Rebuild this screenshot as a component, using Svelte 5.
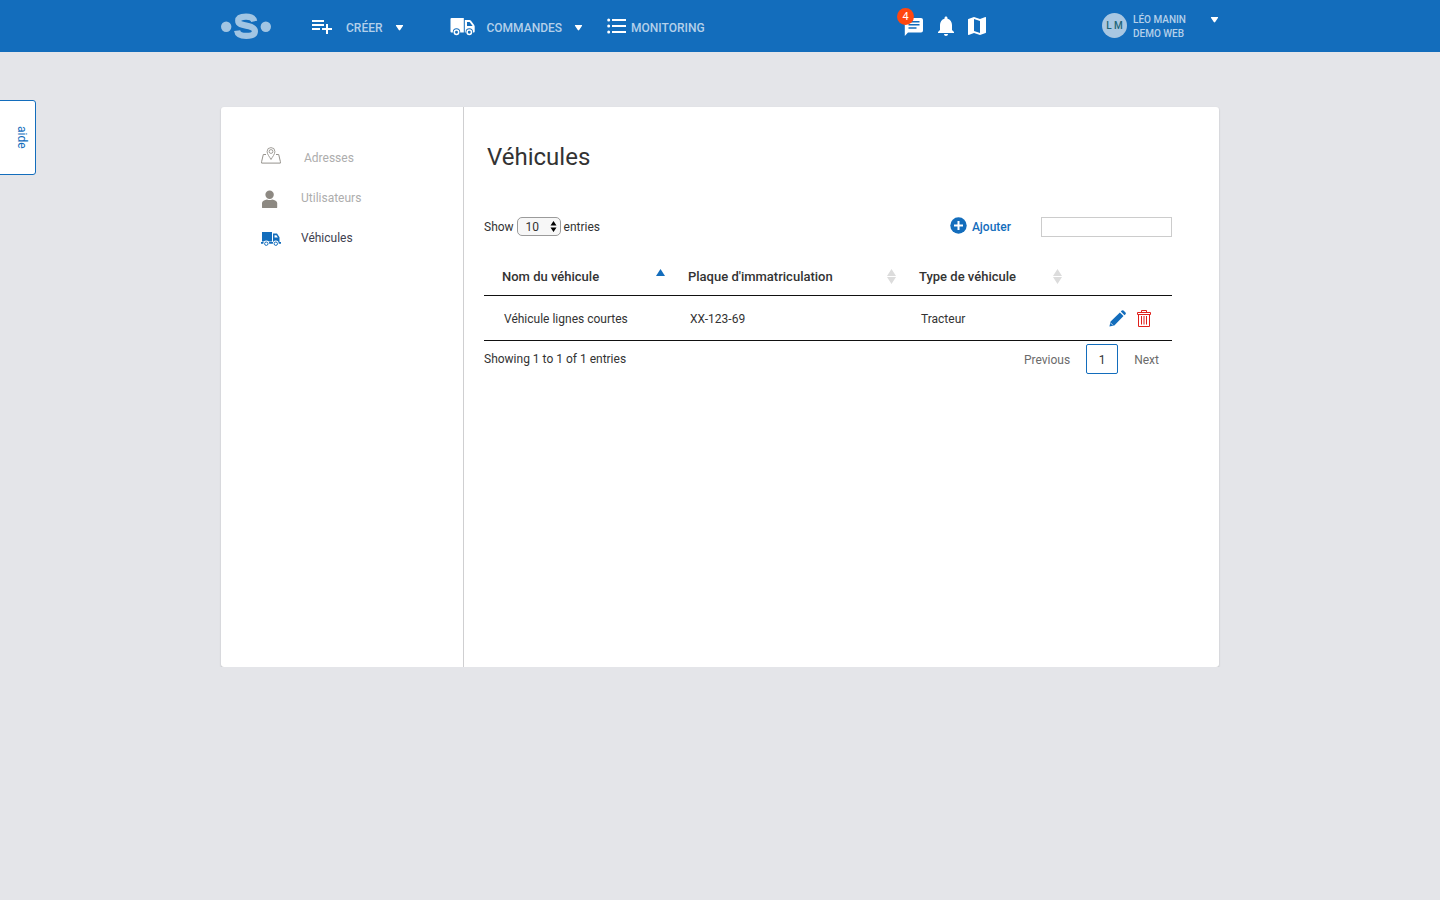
<script>
  let pageSize = $state('10');
  let search = $state('');
  const vehicles = [{ name: 'Véhicule lignes courtes', plate: 'XX-123-69', type: 'Tracteur' }];
</script>

{#snippet caret()}
  <svg class="caret" width="9" height="6" viewBox="0 0 9 6" aria-hidden="true"><path d="M1.600 0h5.800c.7 0 .9.500.5 1L5.200 5.100c-.4.600-1 .6-1.400 0L1.100 1C.7.500.9 0 1.600 0z" fill="#fff" /></svg>
{/snippet}

<header class="topbar">
  <div class="bar">
    <a class="logo" href="#home" aria-label="Accueil">
      <svg width="50" height="28" viewBox="0 0 50 28" fill="none">
        <circle cx="5.200" cy="14.800" r="5.200" fill="#a1c5e3" />
        <circle cx="44.800" cy="14.800" r="5.200" fill="#a1c5e3" />
        <path d="M33.200 9.300C32.400 5.700 29 4.600 25 4.600c-4.500 0-7.800 1.300-7.800 4.200 0 3.300 3.600 4 8 4.800 4.800.9 8.700 2 8.700 5.600 0 3.400-3.700 4.700-8.600 4.700-5 0-8.700-1.300-9.200-5.300" stroke="#a1c5e3" stroke-width="6.200" />
      </svg>
    </a>
    <nav class="menu" aria-label="Navigation principale">
      <button class="item create" type="button">
        <svg width="24" height="24" viewBox="0 0 24 24" fill="#fff"><path d="M14 10H2v2h12zM14 6H2v2h12zM18 14v-4h-2v4h-4v2h4v4h2v-4h4v-2zM2 16h8v-2H2z" /></svg>
        <span>CRÉER</span>
        {@render caret()}
      </button>
      <button class="item orders" type="button">
        <svg width="25" height="18" viewBox="0 0 25 18">
          <path d="M1.500 0h12.300v14.500H1.500Q.5 14.500.5 13.500V1Q.5 0 1.500 0zM14.800 2h4.700Q20.300 2 21 2.800l3 3.900q.7.900.7 1.900v4.900q0 1-1 1h-8.900z" fill="#fff" />
          <path d="M17 4h2.600l3 4.100H17z" fill="#136dbc" />
          <g fill="#136dbc"><circle cx="6.500" cy="13.900" r="3.700" /><circle cx="19.300" cy="13.900" r="3.700" /></g>
          <g fill="#136dbc" stroke="#fff" stroke-width="1.500"><circle cx="6.500" cy="14.200" r="2.200" /><circle cx="19.300" cy="14.200" r="2.200" /></g>
        </svg>
        <span>COMMANDES</span>
        {@render caret()}
      </button>
      <a class="item monitoring" href="#monitoring">
        <svg width="20" height="16" viewBox="0 0 20 16" fill="#fff"><circle cx="1.700" cy="2" r="1.500" /><circle cx="1.700" cy="8" r="1.500" /><circle cx="1.700" cy="14" r="1.500" /><path d="M5 1h14v2H5zM5 7h14v2H5zM5 13h14v2H5z" /></svg>
        <span>MONITORING</span>
      </a>
    </nav>
    <div class="tools">
      <button class="tool messages" type="button" aria-label="Messages">
        <svg width="20" height="20" viewBox="0 0 20 20"><path d="M3 1h14q2 0 2 2v10.500q0 2-2 2H4L.8 19V3Q.8 1 3 1z" fill="#fff" /><path d="M4.500 4.700h11M4.500 7.800h11M4.500 11h8" stroke="#136dbc" stroke-width="1.600" /></svg>
        <span class="badge">4</span>
      </button>
      <button class="tool" type="button" aria-label="Notifications">
        <svg width="16" height="20" viewBox="4 2 16 20" fill="#fff"><path d="M12 22c1.100 0 2-.9 2-2h-4c0 1.100.9 2 2 2zm6-6v-5c0-3.070-1.640-5.640-4.500-6.320V4c0-.83-.67-1.500-1.500-1.500s-1.500.67-1.500 1.500v.68C7.630 5.360 6 7.920 6 11v5l-2 2v1h16v-1l-2-2z" /></svg>
      </button>
      <button class="tool" type="button" aria-label="Carte">
        <svg width="18" height="18" viewBox="3 3 18 18" fill="#fff"><path d="M20.500 3l-.16.030L15 5.100 9 3 3.360 4.900c-.21.070-.36.250-.36.480V20.500c0 .28.220.5.500.5l.16-.030L9 18.900l6 2.100 5.640-1.900c.21-.070.36-.250.36-.480V3.500c0-.28-.220-.5-.5-.5zM15 19l-6-2.110V5l6 2.110V19z" /></svg>
      </button>
    </div>
    <button class="account" type="button">
      <span class="avatar">L M</span>
      <span class="who">LÉO MANIN<br />DEMO WEB</span>
      {@render caret()}
    </button>
  </div>
</header>

<button class="help" type="button">aide</button>

<div class="card">
  <aside>
    <nav aria-label="Paramètres">
      <a class="first" href="#adresses">
        <svg width="20" height="17" viewBox="0 0 20 17" fill="none" stroke="#96938d"><path d="M10 12.500C8.500 9.700 6.100 7.200 6.100 4.500a3.900 3.900 0 0 1 7.800 0c0 2.700-2.400 5.200-3.900 8z" stroke-width=".9" /><circle cx="10" cy="4.500" r="1.900" stroke-width=".9" /><path d="M5 7.500H2.300L.6 14.700v1.400h18.800v-1.400L17.700 7.500H15" /></svg>
        <span>Adresses</span>
      </a>
      <a href="#utilisateurs">
        <svg width="20" height="18" viewBox="0 0 20 18" fill="#8d8982"><circle cx="8.600" cy="4.700" r="4.200" /><path d="M1 17.500v-4.500c0-2 2.500-3 5-3.500q2.600 1.200 5.200 0c2.500.5 5 1.500 5 3.500v4.500q-.2.500-.7.500H1.700q-.5 0-.7-.5z" /></svg>
        <span>Utilisateurs</span>
      </a>
      <a class="active" href="#vehicules" aria-current="page">
        <svg width="20" height="14" viewBox="0 0 20 14"><path d="M1 0h10v9.500H1zM12 1.500h4l2.500 3.700V10H20v1.800H0V10h12z" fill="#136dbc" /><path d="M13.500 3.200h1.900l1.500 2.400h-3.400z" fill="#fff" /><g fill="#fff"><circle cx="5.300" cy="11.500" r="2.900" /><circle cx="14.800" cy="11.500" r="2.900" /></g><g fill="#fff" stroke="#136dbc"><circle cx="5.300" cy="11.700" r="1.700" /><circle cx="14.800" cy="11.700" r="1.700" /></g></svg>
        <span>Véhicules</span>
      </a>
    </nav>
  </aside>
  <main>
    <h1>Véhicules</h1>
    <div class="controls">
      <label class="length">
        Show
        <span class="select">
          <select bind:value={pageSize}><option>10</option><option>25</option><option>50</option><option>100</option></select>
          <svg width="7" height="11" viewBox="0 0 7 11"><path d="M3.500 0 6.500 4.500H.5zM3.500 11 .5 6.500h6z" /></svg>
        </span>
        entries
      </label>
      <div class="actions">
        <button class="add" type="button">
          <svg width="17" height="17" viewBox="0 0 17 17"><circle cx="8.500" cy="8.500" r="8.200" fill="#136dbc" /><path d="M8.500 4v9M4 8.500h9" stroke="#fff" stroke-width="2" /></svg>
          Ajouter
        </button>
        <input type="search" aria-label="Rechercher" bind:value={search} />
      </div>
    </div>
    <table>
      <colgroup><col class="c1" /><col class="c2" /><col class="c3" /><col /></colgroup>
      <thead>
        <tr>
          <th aria-sort="ascending"><button type="button">Nom du véhicule <svg width="9" height="15" viewBox="0 0 9 15"><path d="M4.500 0 9 7H0z" fill="#136dbc" /></svg></button></th>
          {#each ['Plaque d\'immatriculation', 'Type de véhicule'] as title}
            <th><button type="button">{title} <svg width="9" height="15" viewBox="0 0 9 15"><path d="M4.500 0 9 7H0zM4.500 15 0 8h9z" fill="#dcdcdc" /></svg></button></th>
          {/each}
          <th aria-label="Actions"></th>
        </tr>
      </thead>
      <tbody>
        {#each vehicles as v}
          <tr>
            <td>{v.name}</td>
            <td>{v.plate}</td>
            <td>{v.type}</td>
            <td>
              <div class="row-actions">
                <button type="button" aria-label="Modifier"><svg width="17" height="17" viewBox="0 0 17 17" fill="#136dbc"><path d="M.4 16.600l1.200-5L10.900 2.500l3.600 3.600-9.200 9.300zM11.800 1.600l1-1q.8-.7 1.700 0l2 2q.7.900 0 1.700l-1 1z" /><path d="M1.600 12.900l2.500 2.500" stroke="#fff" stroke-width=".7" /></svg></button>
                <button type="button" aria-label="Supprimer"><svg width="14" height="17" viewBox="0 0 14 17" fill="none" stroke="#e0201b"><path d="M4.500 2.500v-2h5v2M.5 2.500h13v2H.5zM1.500 4.500v12h11v-12" /><path d="M4.500 6v8.500M7 6v8.500M9.500 6v8.500" /></svg></button>
              </div>
            </td>
          </tr>
        {/each}
      </tbody>
    </table>
    <div class="footer">
      <p>Showing 1 to 1 of 1 entries</p>
      <div class="pages">
        <button type="button">Previous</button>
        <button class="current" type="button" aria-current="page">1</button>
        <button type="button">Next</button>
      </div>
    </div>
  </main>
</div>

<style>
  :global(body) { background: #e4e5e9; font: 12px/16px Roboto, sans-serif; color: #333; }
  button, input, select { font: inherit; color: inherit; box-sizing: border-box; }
  button { padding: 0; border: 0; background: none; cursor: pointer; text-align: left; }
  a { color: inherit; text-decoration: none; }
  svg { display: block; flex: none; }
  .topbar { background: #136dbc; color: #b3d0ea; font-weight: 500; }
  .bar { display: flex; align-items: center; max-width: 998px; height: 52px; margin: 0 auto; }
  .menu { display: flex; align-items: center; flex: 1; margin-left: 39px; }
  .item { display: flex; align-items: center; white-space: nowrap; }
  .item span { padding-top: 4px; }
  .create { gap: 12px; }
  .create .caret, .orders .caret { margin-top: 3px; }
  .orders { gap: 12px; margin-left: 46px; }
  .orders svg:first-child { margin-top: 2px; }
  .monitoring { gap: 4px; margin-left: 24px; }
  .tools { display: flex; align-items: center; gap: 14px; margin-right: 116px; }
  .tool { position: relative; }
  .messages { margin-top: 2px; }
  .badge { position: absolute; left: -7px; top: -9px; width: 17px; border-radius: 50%; background: #ff470f; color: #fff; font-size: 11px; line-height: 17px; text-align: center; font-weight: 400; }
  .account { display: flex; align-items: center; gap: 6px; width: 117px; font-size: 10px; line-height: 14px; }
  .account .caret { margin: -12px 0 0 auto; }
  .avatar { width: 25px; margin-bottom: 2px; border-radius: 50%; background: #a8c7e2; color: #1f6577; line-height: 25px; text-align: center; }
  .who { padding-top: 2px; white-space: nowrap; }
  .help { position: absolute; left: -1px; top: 100px; width: 37px; height: 75px; padding-left: 8px; border: 1px solid #136dbc; border-radius: 0 3px 3px 0; background: #fff; color: #136dbc; writing-mode: vertical-rl; text-align: center; }
  .card { display: flex; max-width: 998px; min-height: 560px; margin: 55px auto 0; border-radius: 3px; background: #fff; box-shadow: 0 1px 2px rgba(0, 0, 0, .2); }
  aside { flex: none; width: 242px; border-right: 1px solid #cfcfd1; }
  aside nav { padding: 31px 40px; }
  aside a { display: flex; align-items: center; gap: 20px; height: 40px; color: #adadad; }
  aside a.first { gap: 23px; }
  aside a.first svg { margin-bottom: 5px; }
  aside a:not(.first) svg { margin-top: 2px; }
  aside a.active { color: #41414f; }
  main { flex: 1; min-width: 0; padding: 34px 47px 20px 20px; }
  h1 { margin: 0 3px; font-size: 24px; line-height: 32px; font-weight: 400; }
  .controls { display: flex; justify-content: space-between; align-items: center; margin-top: 43px; }
  .length { display: flex; align-items: center; gap: 3px; }
  .select { display: flex; align-items: center; position: relative; }
  .select svg { position: absolute; right: 4px; pointer-events: none; }
  select { appearance: none; width: 44px; height: 19px; padding: 0 8px; border: 1px solid #9b9b9b; border-radius: 5px; background: #f7f7f7; }
  .actions { display: flex; align-items: center; gap: 30px; }
  .add { display: flex; align-items: center; gap: 5px; color: #136dbc; font-weight: 500; }
  .add svg { margin-bottom: 2px; }
  input { width: 131px; height: 20px; margin-top: 1px; padding: 0 4px; border: 1px solid #ccc; border-radius: 0; background: #fff; appearance: none; }
  table { width: 100%; margin-top: 21px; table-layout: fixed; border-collapse: separate; border-spacing: 0; }
  .c1 { width: 186px; }
  .c2 { width: 231px; }
  .c3 { width: 166px; }
  th { height: 37px; padding: 0 0 0 18px; border-bottom: 1px solid #111; }
  th button { display: flex; align-items: center; justify-content: space-between; width: 100%; padding-right: 5px; font-size: 13px; font-weight: 500; }
  td { height: 42px; padding: 2px 20px 0; border-bottom: 1px solid #111; }
  .row-actions { display: flex; justify-content: flex-end; gap: 11px; padding: 0 1px 2px 0; }
  .footer { display: flex; justify-content: space-between; }
  .footer p { margin: 10px 0 0; }
  .pages { display: flex; gap: 3px; margin-top: 3px; color: #6b6b6b; }
  .pages button { min-width: 32px; height: 30px; padding: 2px 12px 0; border: 1px solid transparent; border-radius: 2px; text-align: center; }
  .pages .current { border-color: #136dbc; color: #333; padding: 2px 0 0; }
</style>
